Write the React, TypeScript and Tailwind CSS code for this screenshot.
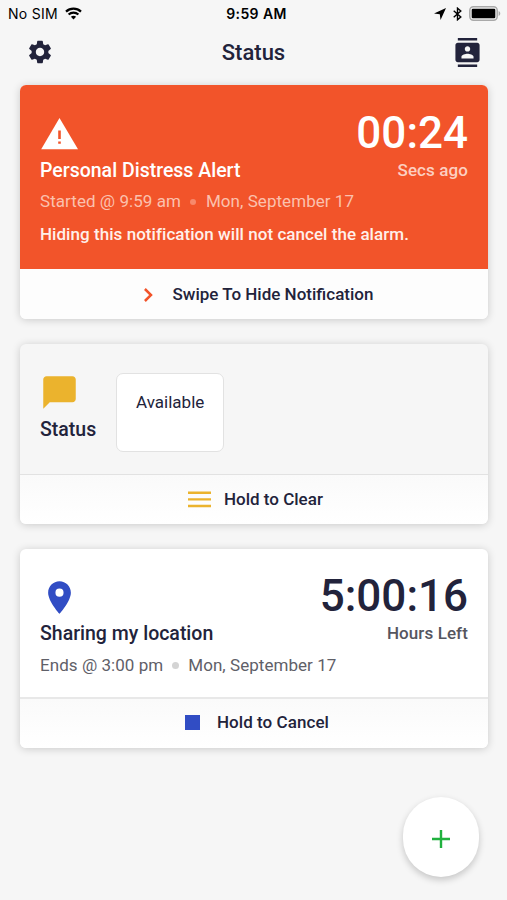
import { MdSettings, MdContacts, MdChatBubble, MdLocationOn } from "react-icons/md";

function StatusBar() {
    return (
        <div className="h-[27px] pl-[8px] pr-[6px] grid grid-cols-3 items-center text-black font-['Inter',sans-serif]">
            <div className="flex items-center gap-[7px]">
                <span className="text-[14px] tracking-[0.3px]">No SIM</span>
                <svg width="17" height="13" viewBox="0 0 17 13" fill="none" stroke="currentColor" strokeWidth="2.2">
                    <path d="M1 4.6C5.2.6 11.8.6 16 4.6" />
                    <path d="M3.6 7.5C6.4 5 10.6 5 13.4 7.5" />
                    <path d="M8.5 12.4L5.9 9.7C7.4 8.5 9.6 8.5 11.1 9.7Z" fill="currentColor" stroke="none" />
                </svg>
            </div>
            <span className="pl-[4px] text-center text-[14px] font-semibold tracking-[0.4px] whitespace-nowrap">9:59 AM</span>
            <div className="flex items-center justify-end">
                <svg className="mr-[7px]" width="12" height="12" viewBox="0 0 11 11" fill="currentColor">
                    <path d="M11 0L6 11L5.3 5.7L0 5Z" />
                </svg>
                <svg className="mr-[7px]" width="9" height="14" viewBox="0 0 9 14" fill="none" stroke="currentColor" strokeWidth="1.4">
                    <path d="M.7 3.8L7.8 10L4.5 12.8V1.2L7.8 4L.7 10.2" />
                </svg>
                <svg width="32" height="15" viewBox="0 0 32 15">
                    <rect x=".8" y=".8" width="27.4" height="13.4" rx="3.6" fill="none" stroke="#a9a9a9" strokeWidth="1.5" />
                    <rect x="2.7" y="2.7" width="23.6" height="9.6" rx="1.2" fill="#000" />
                    <path d="M29.6 5C31.8 5.8 31.8 9.2 29.6 10Z" fill="#a9a9a9" />
                </svg>
            </div>
        </div>
    );
}

function Header() {
    return (
        <header className="h-[58px] pl-[26px] pr-[25px] pb-[8px] flex items-center justify-between">
            <MdSettings size={28} />
            <h1 className="text-[22px] font-medium">Status</h1>
            <MdContacts size={29} />
        </header>
    );
}

function DistressCard() {
    return (
        <section className="h-[234px] rounded-[6px] overflow-hidden bg-white shadow-[0_1px_9px_rgba(0,0,0,0.18)]">
            <div className="h-[184px] px-5 pt-[29px] bg-[#f2542a] text-white">
                <div className="h-[41px] flex justify-between items-start">
                    <svg width="40" height="40" viewBox="0 0 40 40">
                        <path d="M19.5 4L38 35.2H1.2Z" fill="#fff" />
                        <path d="M19.5 16.5V25M19.5 27.4V29.8" stroke="#f2542a" strokeWidth="2.6" />
                    </svg>
                    <span className="text-[44px] leading-[38px] font-medium">00:24</span>
                </div>
                <div className="h-8 flex items-center justify-between">
                    <h2 className="text-[19.5px] font-medium">Personal Distress Alert</h2>
                    <span className="text-[17px] font-medium tracking-[0.1px] text-[#fccfc1]">Secs ago</span>
                </div>
                <div className="h-[30px] flex items-center text-[17px] tracking-[0.05px] text-[#fbc1ae]">
                    <span>Started @ 9:59 am</span>
                    <span className="size-[6px] ml-[9px] mr-[10px] rounded-full bg-[#f7896b]" />
                    <span>Mon, September 17</span>
                </div>
                <p className="text-[17px] leading-[34px] font-medium tracking-[0.05px] text-[#fff0ea]">Hiding this notification will not cancel the alarm.</p>
            </div>
            <div className="h-[50px] pl-[124px] pt-px flex items-center bg-[#fdfdfd]">
                <svg width="9" height="14" viewBox="0 0 9 14" fill="none" stroke="#f2542a" strokeWidth="2.5">
                    <path d="M.9 1L7 7L.9 13" />
                </svg>
                <span className="ml-[19.5px] text-[17px] font-medium">Swipe To Hide Notification</span>
            </div>
        </section>
    );
}

function StatusCard() {
    return (
        <section className="h-[180px] rounded-[6px] overflow-hidden bg-[#f6f6f6] shadow-[0_1px_9px_rgba(0,0,0,0.18)]">
            <div className="h-[131px] px-5 pt-[29px] flex gap-5 border-b border-[#e2e2e2]">
                <div>
                    <MdChatBubble size={39} className="mb-px text-[#ebb32d]" />
                    <h2 className="h-[34px] flex items-center text-[19.5px] font-medium">Status</h2>
                </div>
                <div className="w-[108px] h-[79px] pt-[11px] rounded-[7px] border border-[#e2e2e2] bg-white text-center text-[17px] leading-[34px]">
                    Available
                </div>
            </div>
            <div className="h-[49px] pl-[168px] pt-px flex items-center bg-linear-to-b from-[#fafafa] to-white">
                <svg className="mb-px" width="23" height="17" viewBox="0 0 23 17" stroke="#ebb32d" strokeWidth="2.4">
                    <path d="M0 1.8H23M0 8.4H23M0 15H23" />
                </svg>
                <span className="ml-[13px] text-[17px] font-medium">Hold to Clear</span>
            </div>
        </section>
    );
}

function LocationCard() {
    return (
        <section className="h-[199px] rounded-[6px] overflow-hidden bg-white shadow-[0_1px_9px_rgba(0,0,0,0.18)]">
            <div className="h-[150px] px-5 pt-[29px] border-b-2 border-[#e8e8e8]">
                <div className="h-10 flex justify-between items-start">
                    <MdLocationOn size={39} className="text-[#314dc4]" />
                    <span className="text-[44px] leading-[37px] font-medium">5:00:16</span>
                </div>
                <div className="h-8 flex items-center justify-between">
                    <h2 className="text-[19.5px] font-medium">Sharing my location</h2>
                    <span className="text-[17px] font-medium tracking-[0.1px] text-[#55565f]">Hours Left</span>
                </div>
                <div className="h-[31px] flex items-center text-[17px] tracking-[0.05px] text-[#5f6068]">
                    <span>Ends @ 3:00 pm</span>
                    <span className="size-[7px] mx-[9px] rounded-full bg-[#d4d4d4]" />
                    <span>Mon, September 17</span>
                </div>
            </div>
            <div className="h-[49px] pl-[165px] pb-[2px] flex items-center bg-linear-to-b from-[#fafafa] to-white">
                <span className="size-[15px] bg-[#314dc4]" />
                <span className="ml-[17px] text-[17px] font-medium tracking-[0.05px]">Hold to Cancel</span>
            </div>
        </section>
    );
}

function App() {
    return (
        <div className="relative w-[507px] h-[900px] overflow-hidden bg-[#f6f6f6] text-[#22233b] font-['Roboto',sans-serif]">
            <StatusBar />
            <Header />
            <main className="pl-5 pr-[19px] flex flex-col gap-[25px]">
                <DistressCard />
                <StatusCard />
                <LocationCard />
            </main>
            <button className="absolute left-[403px] top-[797px] w-[76px] h-[80px] pt-[4px] rounded-full bg-white flex items-center justify-center shadow-[0_3px_7px_rgba(0,0,0,0.2)]">
                <svg width="18" height="18" viewBox="0 0 18 18" stroke="#20b13e" strokeWidth="2.4">
                    <path d="M9 0V18M0 9H18" />
                </svg>
            </button>
        </div>
    );
}

export default App;
